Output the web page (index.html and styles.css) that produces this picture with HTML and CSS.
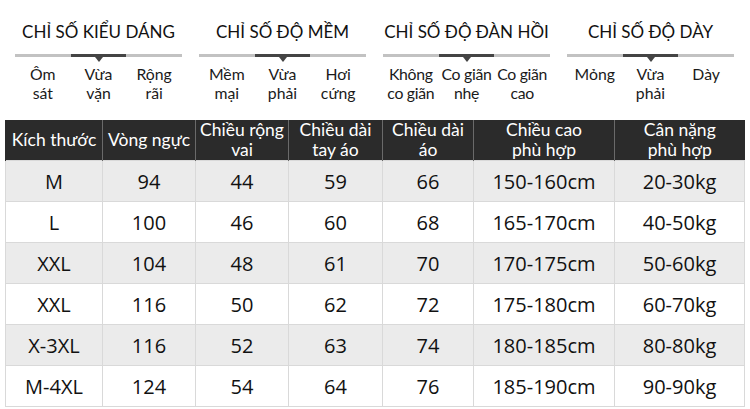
FILE: index.html
```html
<!DOCTYPE html>
<html lang="vi">
<head>
<meta charset="utf-8">
<title>Bảng size</title>
<link rel="stylesheet" href="styles.css">
</head>
<body>
<div class="page">
  <div class="indices">
    <div class="group">
      <div class="title">CHỈ SỐ KIỂU DÁNG</div>
      <div class="bar"><span class="seg"></span><span class="seg active"></span><span class="seg"></span></div>
      <div class="labels">
        <div class="lab"><span class="ln">Ôm</span><span class="ln">sát</span></div>
        <div class="lab"><span class="ln">Vừa</span><span class="ln">vặn</span></div>
        <div class="lab"><span class="ln">Rộng</span><span class="ln">rãi</span></div>
      </div>
    </div>
    <div class="group">
      <div class="title">CHỈ SỐ ĐỘ MỀM</div>
      <div class="bar"><span class="seg"></span><span class="seg active"></span><span class="seg"></span></div>
      <div class="labels">
        <div class="lab"><span class="ln">Mềm</span><span class="ln">mại</span></div>
        <div class="lab"><span class="ln">Vừa</span><span class="ln">phải</span></div>
        <div class="lab"><span class="ln">Hơi</span><span class="ln">cứng</span></div>
      </div>
    </div>
    <div class="group">
      <div class="title">CHỈ SỐ ĐỘ ĐÀN HỒI</div>
      <div class="bar"><span class="seg"></span><span class="seg active"></span><span class="seg"></span></div>
      <div class="labels tight">
        <div class="lab"><span class="ln">Không</span><span class="ln">co giãn</span></div>
        <div class="lab"><span class="ln">Co giãn</span><span class="ln">nhẹ</span></div>
        <div class="lab"><span class="ln">Co giãn</span><span class="ln">cao</span></div>
      </div>
    </div>
    <div class="group">
      <div class="title">CHỈ SỐ ĐỘ DÀY</div>
      <div class="bar"><span class="seg"></span><span class="seg active"></span><span class="seg"></span></div>
      <div class="labels">
        <div class="lab"><span class="ln">Mỏng</span></div>
        <div class="lab"><span class="ln">Vừa</span><span class="ln">phải</span></div>
        <div class="lab"><span class="ln">Dày</span></div>
      </div>
    </div>
  </div>

  <table class="size-table">
    <colgroup>
      <col class="c1"><col class="c2"><col class="c3"><col class="c4"><col class="c5"><col class="c6"><col class="c7">
    </colgroup>
    <thead>
      <tr>
        <th><span class="ln">Kích thước</span></th>
        <th><span class="ln">Vòng ngực</span></th>
        <th><span class="ln">Chiều rộng</span><span class="ln">vai</span></th>
        <th><span class="ln">Chiều dài</span><span class="ln">tay áo</span></th>
        <th><span class="ln">Chiều dài</span><span class="ln">áo</span></th>
        <th><span class="ln">Chiều cao</span><span class="ln">phù hợp</span></th>
        <th><span class="ln">Cân nặng</span><span class="ln">phù hợp</span></th>
      </tr>
    </thead>
    <tbody>
      <tr><td>M</td><td>94</td><td>44</td><td>59</td><td>66</td><td>150-160cm</td><td>20-30kg</td></tr>
      <tr><td>L</td><td>100</td><td>46</td><td>60</td><td>68</td><td>165-170cm</td><td>40-50kg</td></tr>
      <tr><td>XXL</td><td>104</td><td>48</td><td>61</td><td>70</td><td>170-175cm</td><td>50-60kg</td></tr>
      <tr><td>XXL</td><td>116</td><td>50</td><td>62</td><td>72</td><td>175-180cm</td><td>60-70kg</td></tr>
      <tr><td>X-3XL</td><td>116</td><td>52</td><td>63</td><td>74</td><td>180-185cm</td><td>80-80kg</td></tr>
      <tr><td>M-4XL</td><td>124</td><td>54</td><td>64</td><td>76</td><td>185-190cm</td><td>90-90kg</td></tr>
    </tbody>
  </table>
</div>
</body>
</html>
```

FILE: styles.css
```css
html, body {
  margin: 0;
  padding: 0;
  background: #ffffff;
}
body {
  font-family: "Open Sans", "Noto Sans", sans-serif;
  color: #1d1d1d;
  width: 750px;
  height: 409px;
  overflow: hidden;
}
.page {
  padding-top: 20px;
}
.indices {
  display: flex;
  gap: 17px;
  padding-left: 15px;
  font-family: Lato, "Open Sans", sans-serif;
}
.group {
  width: 167px;
  display: flex;
  flex-direction: column;
}
.title {
  text-align: center;
  font-size: 17px;
  line-height: 24px;
  height: 24px;
  color: #111111;
  white-space: nowrap;
}
.bar {
  margin-top: 10px;
  display: flex;
  height: 3px;
}
.seg {
  flex: 1;
  background: #c2c2c2;
}
.seg.active {
  background: #444444;
  position: relative;
}
.seg.active::after {
  content: "";
  position: absolute;
  left: 50%;
  top: 3px;
  margin-left: -4px;
  border-left: 4px solid transparent;
  border-right: 4px solid transparent;
  border-top: 5px solid #444444;
}
.labels {
  display: grid;
  grid-template-columns: repeat(3, 1fr);
  margin-top: 7px;
}
.lab {
  text-align: center;
  font-size: 15.8px;
  color: #1a1a1a;
  white-space: nowrap;
}
.ln {
  display: block;
  line-height: 19px;
  height: 19px;
}
.labels.tight .lab {
  letter-spacing: -0.3px;
}
.size-table {
  margin-top: 18px;
  margin-left: 5px;
  width: 739px;
  border-collapse: collapse;
  table-layout: fixed;
}
.c1 { width: 97px; }
.c2 { width: 93px; }
.c3 { width: 93px; }
.c4 { width: 94px; }
.c5 { width: 91px; }
.c6 { width: 141px; }
.c7 { width: 130px; }
.size-table th {
  background: #2b2b2b;
  color: #ffffff;
  font-family: Lato, "Open Sans", sans-serif;
  font-weight: normal;
  font-size: 17.5px;
  height: 40px;
  padding: 0;
  border-left: 1px solid #6a6a6a;
  text-align: center;
  vertical-align: middle;
  white-space: nowrap;
}
.size-table th .ln {
  line-height: 20px;
  height: 20px;
}
.size-table th:first-child {
  border-left: 1px solid #2b2b2b;
}
.size-table td {
  height: 40px;
  padding: 0;
  font-size: 20px;
  text-align: center;
  vertical-align: middle;
  border: 1px solid #d9d9d9;
  color: #111111;
}
.size-table tbody tr:nth-child(odd) td {
  background: #ebebeb;
}
.size-table tbody tr:nth-child(even) td {
  background: #ffffff;
}
```
